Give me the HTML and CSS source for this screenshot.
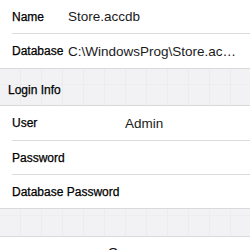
FILE: index.html
```html
<!DOCTYPE html>
<html>
<head>
<meta charset="utf-8">
<link rel="stylesheet" href="styles.css">
</head>
<body>
<div class="group">
  <div class="row inset h34"><span class="label narrow">Name</span><span class="value">Store.accdb</span></div>
  <div class="row h35"><span class="label narrow">Database</span><span class="value">C:\WindowsProg\Store.accdb</span></div>
</div>
<div class="header">Login Info</div>
<div class="group">
  <div class="row inset h35"><span class="label wide">User</span><span class="value">Admin</span></div>
  <div class="row inset h34"><span class="label wide">Password</span><span class="value"></span></div>
  <div class="row h34"><span class="label wide">Database Password</span><span class="value"></span></div>
</div>
<div class="spacer"></div>
<div class="footer"><span class="button">Save</span></div>
</body>
</html>
```
FILE: styles.css
```css
html, body {
  margin: 0;
  padding: 0;
  background: #ffffff;
  overflow: hidden;
}
body {
  font-family: "Liberation Sans", Arial, sans-serif;
  color: #111;
  width: 250px;
}
* {
  box-sizing: border-box;
}
.group {
  background: #fff;
}
.row {
  position: relative;
  display: flex;
  align-items: center;
  padding-left: 12px;
  border-bottom: 1px solid #d9d9dc;
  white-space: nowrap;
}
.row.h34 {
  height: 34px;
}
.row.h35 {
  height: 35px;
}
.row.inset {
  border-bottom: 1px solid transparent;
}
.row.inset::after {
  content: "";
  position: absolute;
  left: 12px;
  right: 0;
  bottom: -1px;
  height: 1px;
  background: #dcdce0;
}
.label {
  font-size: 12px;
  color: #000;
  -webkit-text-stroke: 0.25px #000;
  flex: none;
}
.label.narrow {
  width: 56px;
}
.label.wide {
  width: 113px;
}
.value {
  font-size: 13.5px;
  color: #1a1a1a;
  overflow: hidden;
  text-overflow: ellipsis;
  flex: 1;
  min-width: 0;
  padding-right: 12px;
}
.header,
.spacer {
  background-color: #f2f2f4;
  background-image:
    repeating-linear-gradient(90deg, transparent 0 20px, #ececef 20px 21px),
    repeating-linear-gradient(0deg, transparent 0 20px, #eeeef0 20px 21px);
  border-bottom: 1px solid #d9d9dc;
}
.header {
  height: 37px;
  display: flex;
  align-items: flex-end;
  padding-left: 8px;
  padding-bottom: 8px;
  font-size: 12px;
  color: #000;
  -webkit-text-stroke: 0.25px #000;
}
.spacer {
  height: 28px;
}
.footer {
  display: flex;
  justify-content: center;
  padding-top: 7px;
}
.button {
  font-size: 15px;
  color: #111;
}
```
